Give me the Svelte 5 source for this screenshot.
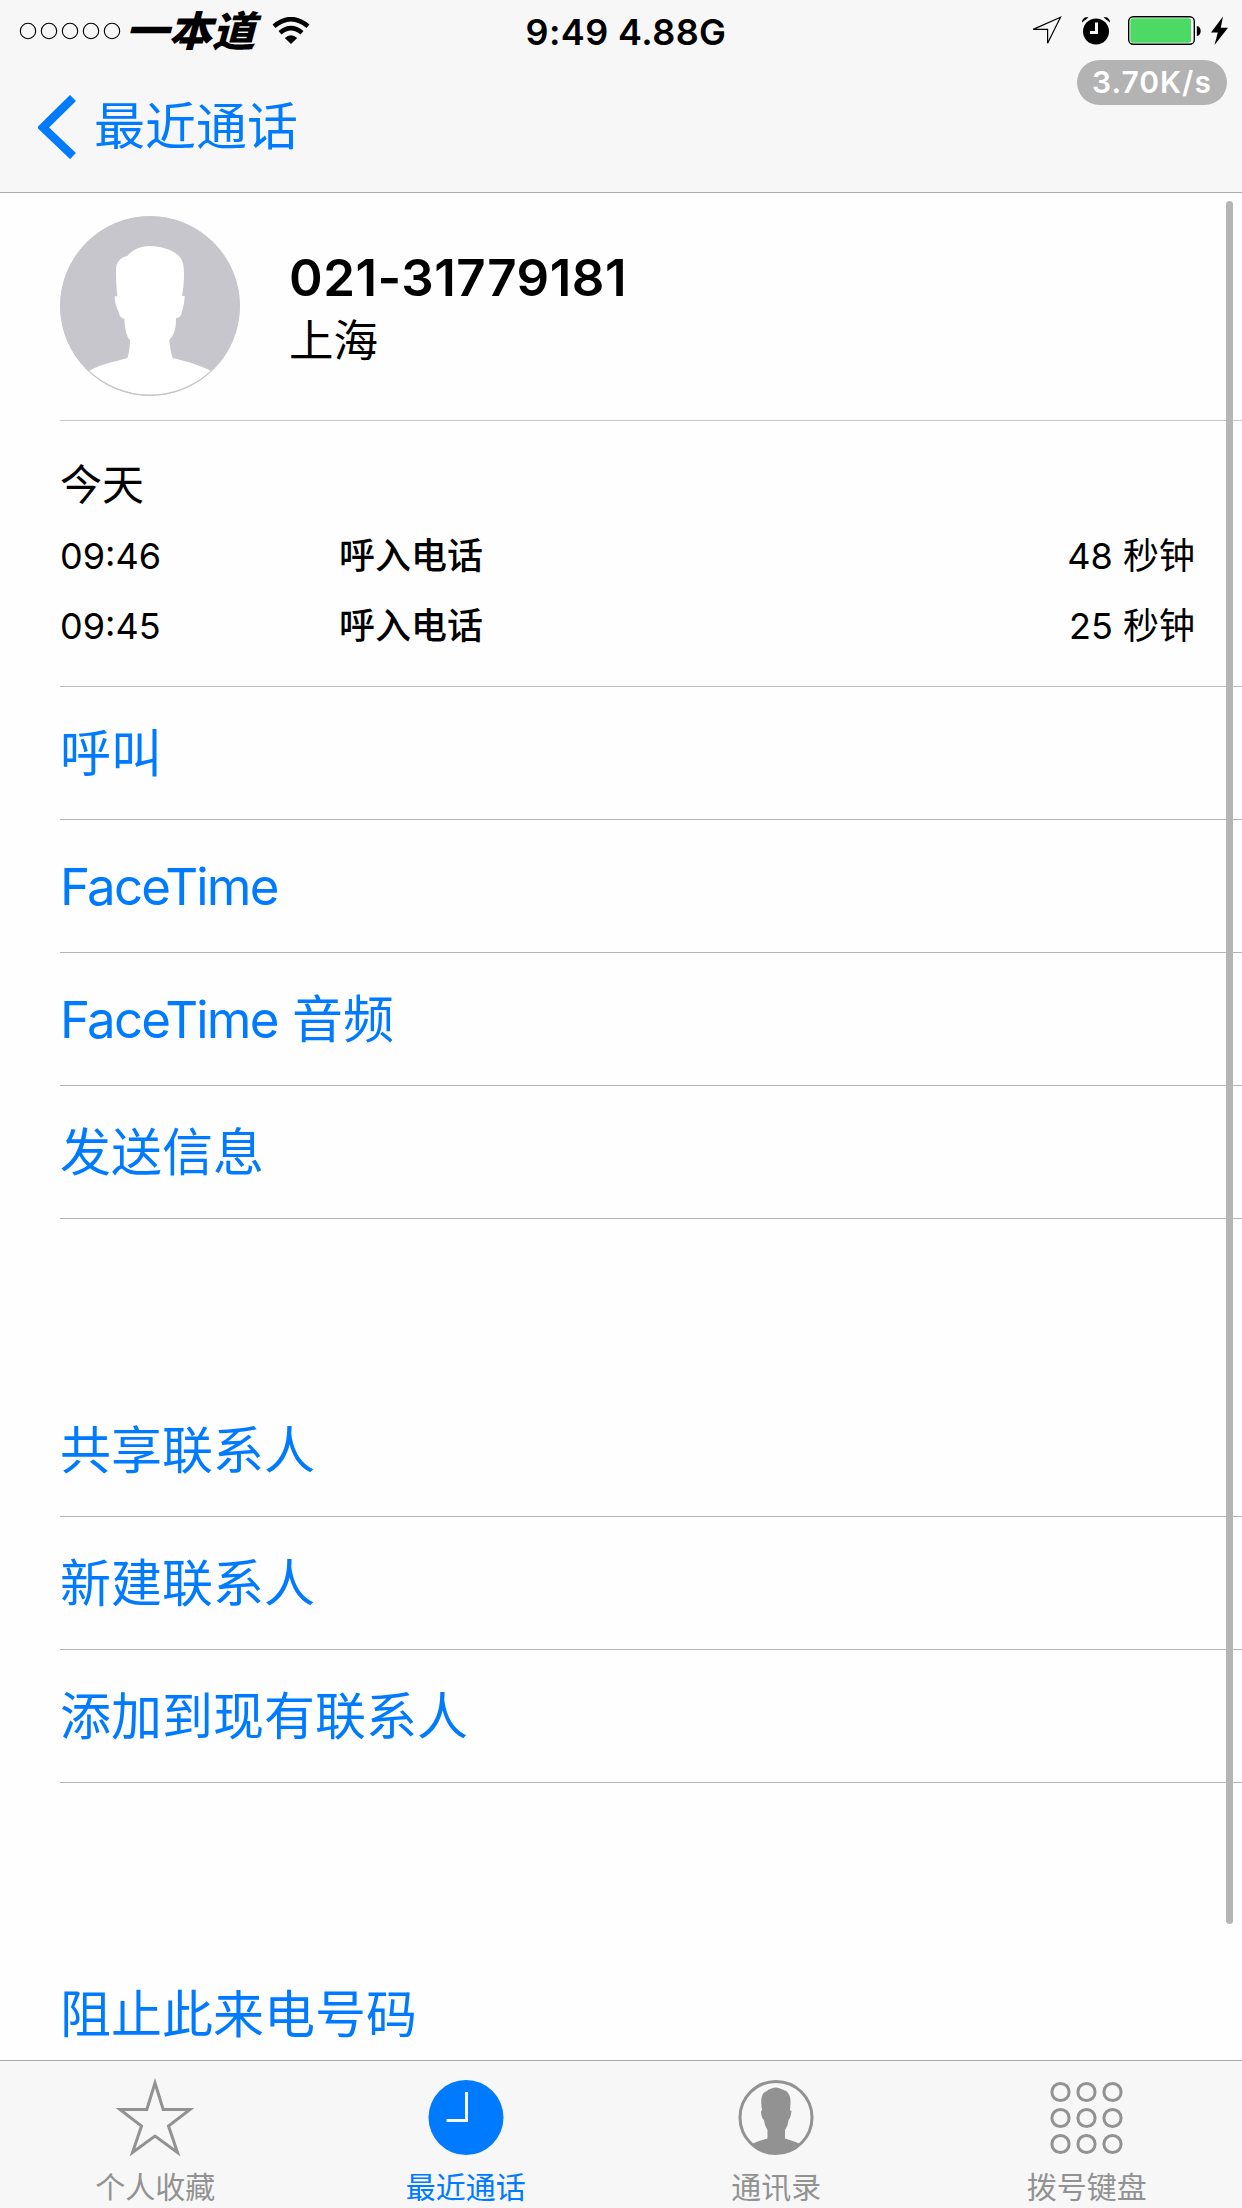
<script lang="ts">
  type Call = { time: string; kind: string; duration: string };
  type Action = { brand?: string; label: string };
  type TabId = "favorites" | "recents" | "contacts" | "keypad";

  const calls: Call[] = [
    { time: "09:46", kind: "呼入电话", duration: "48 秒钟" },
    { time: "09:45", kind: "呼入电话", duration: "25 秒钟" },
  ];

  // One entry per block of rows; blocks are separated by a wide gap.
  const actionGroups: Action[][] = [
    [
      { label: "呼叫" },
      { brand: "FaceTime", label: "" },
      { brand: "FaceTime", label: " 音频" },
      { label: "发送信息" },
    ],
    [
      { label: "共享联系人" },
      { label: "新建联系人" },
      { label: "添加到现有联系人" },
    ],
    [{ label: "阻止此来电号码" }],
  ];

  const tabs: { id: TabId; label: string }[] = [
    { id: "favorites", label: "个人收藏" },
    { id: "recents", label: "最近通话" },
    { id: "contacts", label: "通讯录" },
    { id: "keypad", label: "拨号键盘" },
  ];

  let activeTab: TabId = $state("recents");

  const dots = [0, 1, 2, 3, 4];
  const keys = [11.5, 37.5, 63.5];
</script>

<div class="screen">
  <header>
    <div class="status">
      <div class="status-left">
        <svg class="signal" width="102" height="18" viewBox="0 0 102 18">
          {#each dots as i}
            <circle cx={9 + i * 21} cy="9" r="7.7" />
          {/each}
        </svg>
        <span class="carrier">一本道</span>
        <svg class="wifi" width="38" height="28" viewBox="0 0 38 28">
          <path class="arc" d="M2 9.2Q19 -5 36 9.2" />
          <path class="arc" d="M8 15.8Q19 6.4 30 15.8" />
          <path d="M12.8 21Q19 15.4 25.2 21L19 27Z" />
        </svg>
      </div>
      <span class="clock">9:49 4.88G</span>
      <div class="status-right">
        <svg width="30" height="30" viewBox="0 0 30 30">
          <path class="outline" d="M28.5 1.2L1.2 13.4H15.6V27.2Z" />
        </svg>
        <svg class="alarm" width="30" height="30" viewBox="0 0 30 30">
          <circle cx="15" cy="15.5" r="13" />
          <path d="M1 6.5C1 2.5 4 .5 7.5 1.5ZM29 6.5C29 2.5 26 .5 22.5 1.5Z" />
          <path class="hands" d="M15.5 6.5V16.5H9" />
        </svg>
        <svg class="battery" width="74" height="30" viewBox="0 0 74 30">
          <rect class="shell" x=".7" y=".7" width="65.6" height="27.6" rx="4.5" />
          <rect class="charge" x="2.3" y="2.3" width="60.7" height="24.4" rx="2.5" />
          <path d="M68.8 10C74 10.5 74 19.5 68.8 20Z" />
        </svg>
        <svg class="bolt" width="17" height="30" viewBox="0 0 17 30">
          <path d="M12 .5L0 16.5H6.8L3.5 29L17 11.8H9.8Z" />
        </svg>
      </div>
      <span class="speed">3.70K/s</span>
    </div>
    <button type="button" class="back">
      <svg width="40" height="64" viewBox="0 0 40 64">
        <path d="M35 3L5 32.5L35 61" />
      </svg>
      <span>最近通话</span>
    </button>
  </header>

  <main>
    <section class="contact">
      <svg class="avatar" width="180" height="180" viewBox="30 30 540 540">
        <circle class="disc" cx="300" cy="300" r="269" />
        <path
          class="person"
          d="M118 494C145 478 190 468 232 456C238 440 240 420 240 402C230 392 225 372 223 338C214 338 208 330 206 318C198 302 194 290 194 271H202C199 245 198 220 198 190C199 170 210 154 232 150C246 132 272 120 300 120C335 121 368 132 385 148C400 163 402 182 402 205C402 230 400 250 396 270H404C403 293 399 305 396 318C394 330 388 336 378 336C378 362 376 382 358 402C359 420 362 440 368 456C410 466 450 478 482 494A267 267 0 0 1 118 494Z"
        />
        <circle class="ring" cx="300" cy="300" r="268.5" />
      </svg>
      <div class="who">
        <h1>021-31779181</h1>
        <p>上海</p>
      </div>
    </section>

    <section class="log">
      <h2>今天</h2>
      {#each calls as call}
        <div class="call">
          <span class="time">{call.time}</span>
          <span class="kind">{call.kind}</span>
          <span class="duration">{call.duration}</span>
        </div>
      {/each}
    </section>

    {#each actionGroups as group}
      <ul class="actions">
        {#each group as action}
          <li>
            <button type="button">
              {#if action.brand}<span class="brand">{action.brand}</span>{/if}{action.label}
            </button>
          </li>
        {/each}
      </ul>
    {/each}

    <div class="scrollbar"></div>
  </main>

  <nav>
    {#each tabs as tab (tab.id)}
      <button
        type="button"
        class:active={activeTab === tab.id}
        onclick={() => (activeTab = tab.id)}
      >
        {#if tab.id === "favorites"}
          <svg width="82" height="80" viewBox="0 0 82 80">
            <path
              class="line"
              d="M41 5L49.2 31.5H76L54.5 48L63.5 74.5L41 58L18.5 74.5L27.5 48L6 31.5H32.8Z"
            />
          </svg>
        {:else if tab.id === "recents"}
          <svg width="76" height="80" viewBox="0 0 76 80">
            <circle class="fill" cx="38" cy="39.5" r="37.5" />
            <path class="hands" d="M38.5 14V42.5H18.5" />
          </svg>
        {:else if tab.id === "contacts"}
          <svg width="76" height="80" viewBox="0 0 76 80">
            <circle class="line" cx="38" cy="39.5" r="36" />
            <path
              class="fill"
              d="M14 66C20 63 25 62 29.5 60.5V52C27 48 26.5 45 26 42C24 41 23 36 23 33.5L24 32C22 20 24 15 28 13.5C32 10.5 35 9.5 38 9.5C42 10 45 11.5 48 13C53 17 53 22 52 32L53.5 33C53 37 52 41 50.5 42C50 46 49 49 47 52V60.5C51 62 56 63 62 66A37 37 0 0 1 14 66Z"
            />
          </svg>
        {:else}
          <svg width="76" height="80" viewBox="0 0 76 80">
            {#each keys as y}
              {#each keys as x}
                <circle class="line" cx={x} cy={y + 2.5} r="8.6" />
              {/each}
            {/each}
          </svg>
        {/if}
        <span>{tab.label}</span>
      </button>
    {/each}
  </nav>
</div>

<style>
  :global(body) {
    margin: 0;
    background: #fefefe;
  }

  .screen {
    width: 1242px;
    height: 2208px;
    display: flex;
    flex-direction: column;
    overflow: hidden;
    color: #000;
    font-family: Inter, "Noto Sans CJK SC", sans-serif;
  }

  svg {
    display: block;
    flex: none;
  }

  button {
    margin: 0;
    padding: 0;
    border: 0;
    background: none;
    color: #007aff;
    font: inherit;
    text-align: left;
    cursor: pointer;
  }

  header {
    flex: none;
    box-sizing: border-box;
    height: 193px;
    background: #f7f7f7;
    border-bottom: 1px solid #a9a9a9;
  }

  .status {
    position: relative;
    height: 60px;
    display: grid;
    grid-template-columns: 1fr auto 1fr;
    align-items: center;
  }

  .status-left,
  .status-right {
    display: flex;
    align-items: center;
  }

  .status-left {
    padding-left: 19px;
  }

  .signal circle {
    fill: none;
    stroke: #000;
    stroke-width: 1.1;
  }

  .carrier {
    width: 128px;
    margin-left: 8px;
    font-size: 41px;
    font-weight: 900;
    font-style: italic;
    line-height: 60px;
    white-space: nowrap;
    transform: scaleX(1.06);
  }

  .wifi {
    margin-left: 15px;
  }

  .wifi .arc {
    fill: none;
    stroke: #000;
    stroke-width: 4.5;
  }

  .clock {
    padding: 2px 0 0 10px;
    font-size: 36px;
    font-weight: 600;
    line-height: 60px;
    letter-spacing: 0.4px;
  }

  .status-right {
    justify-content: flex-end;
    padding-right: 14px;
  }

  .status-right .outline {
    fill: none;
    stroke: #000;
    stroke-width: 1.2;
  }

  .alarm {
    margin-left: 19px;
  }

  .alarm .hands {
    fill: none;
    stroke: #f7f7f7;
    stroke-width: 3;
  }

  .battery {
    margin-left: 17px;
  }

  .battery .shell {
    fill: #fff;
    stroke: #000;
    stroke-width: 1.4;
  }

  .battery .charge {
    fill: #4cd964;
  }

  .bolt {
    margin-left: 9px;
  }

  /* Network speed badge hangs below the status icons */
  .speed {
    position: absolute;
    top: 60px;
    right: 15px;
    width: 150px;
    height: 45px;
    border-radius: 23px;
    background: #b3b3b3;
    color: #fff;
    font-size: 30px;
    font-weight: 600;
    line-height: 44px;
    letter-spacing: 1px;
    text-align: center;
  }

  .back {
    display: flex;
    align-items: center;
    height: 132px;
    padding: 2px 0 0 38px;
    font-size: 51px;
    line-height: 130px;
  }

  .back svg path {
    fill: none;
    stroke: #007aff;
    stroke-width: 8.5;
  }

  .back span {
    margin-left: 16px;
  }

  main {
    position: relative;
    flex: 1;
    min-height: 0;
    overflow: hidden;
    padding-left: 60px;
    background: #fefefe;
  }

  .contact {
    box-sizing: border-box;
    height: 228px;
    display: flex;
    padding-top: 23px;
    border-bottom: 1px solid #c8c7cc;
  }

  .avatar .disc {
    fill: #c7c6cd;
  }

  .avatar .person {
    fill: #fff;
  }

  .avatar .ring {
    fill: none;
    stroke: #c7c6cd;
    stroke-width: 3;
  }

  .who {
    margin: 28px 0 0 49px;
  }

  .who h1 {
    margin: 0;
    font-size: 51px;
    font-weight: 600;
    line-height: 68px;
    letter-spacing: 0.5px;
  }

  .who p {
    margin: 0;
    font-size: 44.5px;
    line-height: 58px;
  }

  .log {
    box-sizing: border-box;
    height: 266px;
    padding: 27px 47px 0 0;
    border-bottom: 1px solid #bcbcbe;
  }

  .log h2 {
    margin: 0;
    font-size: 42px;
    font-weight: 400;
    line-height: 73px;
  }

  .call {
    display: grid;
    grid-template-columns: 279px 1fr auto;
    font-size: 36px;
    line-height: 70px;
  }

  .kind {
    font-weight: 500;
  }

  .actions {
    margin: 0;
    padding: 0;
    list-style: none;
  }

  .actions + .actions {
    margin-top: 165px;
  }

  .actions li {
    border-bottom: 1px solid #b4b4b6;
  }

  .actions button {
    display: block;
    width: 100%;
    height: 132px;
    padding-top: 2px;
    font-size: 51px;
    line-height: 130px;
    white-space: pre-line;
  }

  .brand {
    letter-spacing: -1.8px;
  }

  .scrollbar {
    position: absolute;
    top: 8px;
    right: 9px;
    width: 7px;
    height: 1723px;
    border-radius: 4px;
    background: #b5b5b5;
  }

  nav {
    flex: none;
    box-sizing: border-box;
    height: 148px;
    display: grid;
    grid-template-columns: repeat(4, 1fr);
    border-top: 1px solid #a9a9a9;
    background: #f7f7f7;
  }

  nav button {
    display: flex;
    flex-direction: column;
    align-items: center;
    padding-top: 17px;
    color: #929292;
    font-size: 30px;
    line-height: 44px;
  }

  nav button.active {
    color: #007aff;
  }

  nav .line {
    fill: none;
    stroke: currentColor;
    stroke-width: 3;
  }

  nav .fill {
    fill: currentColor;
  }

  nav .hands {
    fill: none;
    stroke: #f7f7f7;
    stroke-width: 3;
  }

  nav span {
    margin-top: 7px;
  }
</style>
